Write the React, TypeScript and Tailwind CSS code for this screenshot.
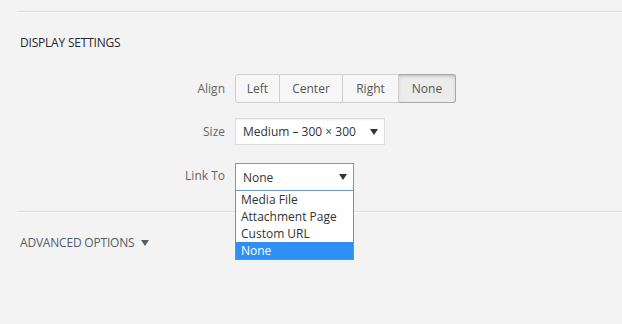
import React from "react";

const font = { fontFamily: '"Open Sans", "Noto Sans", sans-serif' };

function Caret() {
  return (
    <svg width="8" height="6" viewBox="0 0 8 6" className="shrink-0">
      <path d="M0 0 L8 0 L4 6 Z" fill="#333" />
    </svg>
  );
}

export default function App() {
  return (
    <div
      className="w-[622px] h-[324px] bg-[#f3f3f3] overflow-hidden relative text-[#444]"
      style={font}
    >
      <div className="pl-[17px]">
        <div className="mt-[11px] h-[2px] border-t border-[#dcdcdc] border-b border-b-[#fbfbfb]" />
        <h2 className="mt-[22px] pl-[3px] text-[12px] leading-[16px] text-[#23282d] tracking-[-0.2px]">
          DISPLAY SETTINGS
        </h2>

        <div className="mt-[23px] flex items-center">
          <div className="w-[208px] text-right text-[12px] text-[#666] pr-0">Align</div>
          <div className="ml-[10px] flex h-[29px] text-[12px] text-[#555]">
            <div className="w-[45px] flex items-center justify-center bg-[#f7f7f7] border border-[#cfcfcf] rounded-l-[3px]">Left</div>
            <div className="w-[63px] flex items-center justify-center bg-[#f7f7f7] border-y border-r border-[#cfcfcf]">Center</div>
            <div className="w-[56px] flex items-center justify-center bg-[#f7f7f7] border-y border-r border-[#cfcfcf]">Right</div>
            <div className="w-[57px] flex items-center justify-center bg-[#ececec] border-y border-r border-[#a8a8a8] rounded-r-[3px] shadow-[inset_0_2px_5px_-3px_rgba(0,0,0,0.5)]">None</div>
          </div>
        </div>

        <div className="mt-[15px] flex items-center">
          <div className="w-[208px] text-right text-[12px] text-[#666]">Size</div>
          <div className="ml-[10px] w-[150px] h-[27px] bg-white border border-[#ddd] shadow-[inset_0_1px_2px_rgba(0,0,0,0.07)] flex items-center pl-[7px] pr-[6px] text-[12px] text-[#333]">
            <span className="flex-1">Medium – 300 × 300</span>
            <Caret />
          </div>
        </div>

        <div className="mt-[18px] flex items-center">
          <div className="w-[208px] text-right text-[12px] text-[#666] -mt-[3px]">Link To</div>
          <div className="ml-[10px] relative">
            <div className="w-[119px] h-[28px] bg-white border border-[#6f9bbd] flex items-center pl-[7px] pr-[6px] text-[12px] text-[#333]">
              <span className="flex-1 pt-[1px]">None</span>
              <Caret />
            </div>
            <div className="absolute left-0 top-[28px] w-[119px] bg-white border border-[#8a8a8a] border-t-0 z-10 text-[12px] leading-[17px] text-[#333]">
              <div className="pl-[5px]">Media File</div>
              <div className="pl-[5px]">Attachment Page</div>
              <div className="pl-[5px]">Custom URL</div>
              <div className="pl-[5px] bg-[#2f8ff5] text-white">None</div>
            </div>
          </div>
        </div>

        <div className="mt-[20px] h-[2px] border-t border-[#dcdcdc] border-b border-b-[#fbfbfb]" />

        <div className="mt-[21px] pl-[3px] flex items-center gap-[7px] text-[12px] text-[#555d66] tracking-[-0.2px]">
          <span>ADVANCED OPTIONS</span>
          <svg width="8" height="6" viewBox="0 0 8 6">
            <path d="M0 0 L8 0 L4 6 Z" fill="#555d66" />
          </svg>
        </div>
      </div>
    </div>
  );
}
